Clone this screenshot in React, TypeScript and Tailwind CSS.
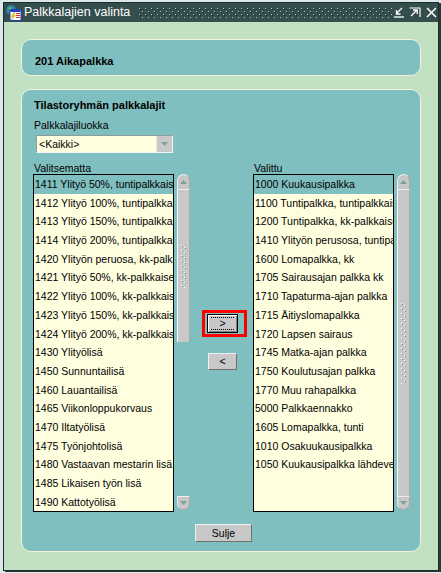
import React from "react";

const left = [
  "1411 Ylityö 50%, tuntipalkkaiset",
  "1412 Ylityö 100%, tuntipalkkaiset",
  "1413 Ylityö 150%, tuntipalkkaiset",
  "1414 Ylityö 200%, tuntipalkkaiset",
  "1420 Ylityön peruosa, kk-palkkaiset",
  "1421 Ylityö 50%, kk-palkkaiset",
  "1422 Ylityö 100%, kk-palkkaiset",
  "1423 Ylityö 150%, kk-palkkaiset",
  "1424 Ylityö 200%, kk-palkkaiset",
  "1430 Ylityölisä",
  "1450 Sunnuntailisä",
  "1460 Lauantailisä",
  "1465 Viikonloppukorvaus",
  "1470 Iltatyölisä",
  "1475 Työnjohtolisä",
  "1480 Vastaavan mestarin lisä",
  "1485 Likaisen työn lisä",
  "1490 Kattotyölisä",
];

const right = [
  "1000 Kuukausipalkka",
  "1100 Tuntipalkka, tuntipalkkaiset",
  "1200 Tuntipalkka, kk-palkkaiset",
  "1410 Ylityön perusosa, tuntipalkkaiset",
  "1600 Lomapalkka, kk",
  "1705 Sairausajan palkka kk",
  "1710 Tapaturma-ajan palkka",
  "1715 Äitiyslomapalkka",
  "1720 Lapsen sairaus",
  "1745 Matka-ajan palkka",
  "1750 Koulutusajan palkka",
  "1770 Muu rahapalkka",
  "5000 Palkkaennakko",
  "1605 Lomapalkka, tunti",
  "1010 Osakuukausipalkka",
  "1050 Kuukausipalkka lähdevero",
];

function Grip({ h, id }: { h: number; id: string }) {
  return (
    <svg width="7" height={h}>
      <defs>
        <pattern id={id} width="7" height="5" patternUnits="userSpaceOnUse">
          <rect x="1" y="0" width="1" height="1" fill="#ffffff" />
          <rect x="2" y="1" width="1" height="1" fill="#6f9494" />
          <rect x="4" y="2" width="1" height="1" fill="#ffffff" />
          <rect x="5" y="3" width="1" height="1" fill="#6f9494" />
        </pattern>
      </defs>
      <rect width="7" height={h} fill={`url(#${id})`} />
    </svg>
  );
}

function Scrollbar({ full, id }: { full: boolean; id: string }) {
  return (
    <div className="ml-[3px] flex h-[336px] w-[13px] flex-col">
      <div className="flex h-[16px] items-center justify-center rounded-t-[7px] border border-b border-[#ececec] border-r-[#a8a8a8] bg-[#c8c8c8]">
        <svg width="7" height="4">
          <path d="M0 4 L3.5 0 L7 4Z" fill="#7f9f9f" />
        </svg>
      </div>
      {full ? (
        <div className="flex flex-1 items-center justify-center border-l border-white border-r border-r-[#a8a8a8] bg-[#c8c8c8]">
          <Grip h={81} id={id} />
        </div>
      ) : (
        <>
          <div className="flex h-[152px] items-center justify-center border-l border-white border-r border-r-[#a8a8a8] bg-[#c8c8c8]">
            <Grip h={43} id={id} />
          </div>
          <div className="flex-1" />
        </>
      )}
      <div className="flex h-[14px] items-center justify-center rounded-b-[7px] border border-[#ececec] border-r-[#a8a8a8] border-b-[#a8a8a8] bg-[#c8c8c8]">
        <svg width="7" height="4">
          <path d="M0 0 L3.5 4 L7 0Z" fill="#7f9f9f" />
        </svg>
      </div>
    </div>
  );
}

function ListBox({ items }: { items: string[] }) {
  return (
    <div className="h-[338px] w-[141px] overflow-hidden border border-black bg-[#ffffe0]">
      {items.map((t, i) => (
        <div
          key={t}
          className={`h-[18.7px] overflow-hidden whitespace-nowrap pl-px text-[10.5px] leading-[18.7px] text-black ${
            i === 0 ? "bg-[#80bfbf]" : ""
          }`}
        >
          {t}
        </div>
      ))}
    </div>
  );
}

function TitleIcon() {
  return (
    <svg width="17" height="17" viewBox="0 0 17 17">
      <circle cx="6" cy="6" r="5" fill="#2f7f9f" />
      <path d="M3 4 Q5 2 7 4 Q8 6 6 8 Q4 7 3 4Z" fill="#5fbf5f" />
      <rect x="5" y="5.5" width="11" height="11" fill="#ffffff" stroke="#1f3fbf" strokeWidth="1" />
      <rect x="5.5" y="6" width="10" height="2" fill="#1f3fbf" />
      <rect x="11" y="9" width="4" height="1" fill="#df2f2f" />
      <rect x="11" y="11" width="4" height="1" fill="#df2f2f" />
      <rect x="11" y="13" width="4" height="1" fill="#df2f2f" />
      <path d="M9 8.5 L6 12.5 L8 12.5 L6.5 16 L10.5 11.5 L8.5 11.5 L10 8.5Z" fill="#ffdf00" stroke="#bf7f00" strokeWidth="0.4" />
    </svg>
  );
}

function TitleDots() {
  return (
    <svg width="253" height="10">
      <defs>
        <pattern id="tdots" width="6" height="6" patternUnits="userSpaceOnUse">
          <rect x="0" y="0" width="1" height="1" fill="#b4c4c4" />
          <rect x="1" y="1" width="1" height="1" fill="#1c2c2c" />
          <rect x="3" y="3" width="1" height="1" fill="#b4c4c4" />
          <rect x="4" y="4" width="1" height="1" fill="#1c2c2c" />
        </pattern>
      </defs>
      <rect width="253" height="10" fill="url(#tdots)" />
    </svg>
  );
}

export default function App() {
  return (
    <div className="h-[573px] w-[441px] overflow-hidden bg-[#dce8e8] pl-[3px] pt-[2px] font-['Liberation_Sans',Arial,sans-serif]">
      <div className="flex h-[569px] w-[436px] flex-col border border-[#1e2c2c] bg-[#c2e0c2] shadow-[2px_1px_0_#2a3a3a]">
        {/* Title bar */}
        <div className="flex h-[19px] items-center bg-[#344e4e]">
          <div className="ml-px">
            <TitleIcon />
          </div>
          <span className="ml-[2px] text-[12.5px] leading-[19px] text-white">Palkkalajien valinta</span>
          <div className="ml-[9px] flex items-center">
            <TitleDots />
          </div>
          <div className="ml-[2px] flex items-center">
            <svg width="11" height="11" viewBox="0 0 11 11">
              <path d="M8 1 L2.5 6.5 M2.5 3 L2.5 7 L6.5 7" stroke="#ffffff" strokeWidth="1.3" fill="none" />
              <path d="M0 10 L10 10" stroke="#ffffff" strokeWidth="1.3" />
            </svg>
            <svg width="12" height="11" viewBox="0 0 12 11" className="ml-[4px]">
              <path d="M0.5 1 L11 1 L11 10" stroke="#ffffff" strokeWidth="1.2" fill="none" />
              <path d="M2 9 L8 3 M4 3 L8.2 3 L8.2 7" stroke="#ffffff" strokeWidth="1.3" fill="none" />
            </svg>
            <svg width="11" height="11" viewBox="0 0 11 11" className="ml-[5px]">
              <path d="M1 1 L10 10 M10 1 L1 10" stroke="#ffffff" strokeWidth="1.5" />
            </svg>
          </div>
        </div>

        {/* Body */}
        <div className="flex flex-1 flex-col px-[17px] pt-[17px]">
          <div className="h-[37px] rounded-[10px] border border-[#f2f2da] bg-[#80bfbf] pl-[13px] pt-[14px] text-[11px] font-bold leading-[14px] text-black">
            201 Aikapalkka
          </div>

          <div className="mt-[13px] h-[463px] rounded-[10px] border border-[#f2f2da] bg-[#80bfbf] pl-[11px] pt-[8px] text-black">
            <div className="pl-px text-[11px] font-bold leading-[14px]">Tilastoryhmän palkkalajit</div>
            <div className="mt-[6px] pl-px text-[10.5px] leading-[14px]">Palkkalajiluokka</div>
            <div className="ml-[3px] mt-[3px] flex h-[18px] w-[137px] items-center border border-[#8c9c9c] border-b-[#f4f4f4] border-r-[#f4f4f4] bg-[#ffffe0]">
              <span className="flex-1 pl-[2px] text-[10.5px] leading-[16px]">&lt;Kaikki&gt;</span>
              <div className="flex h-full w-[16px] items-center justify-center border-l border-[#e8e8e8] bg-[#c8c8c8]">
                <svg width="7" height="4">
                  <path d="M0 0 L3.5 4 L7 0Z" fill="#7f9f9f" />
                </svg>
              </div>
            </div>

            <div className="mt-[9px] flex text-[10.5px] leading-[12px]">
              <div className="w-[220px] pl-px">Valitsematta</div>
              <div className="pl-px">Valittu</div>
            </div>

            <div className="flex">
              <ListBox items={left} />
              <Scrollbar full={false} id="g1" />
              <div className="flex w-[63px] flex-col pt-[140px]">
                <div className="relative ml-[17px] h-[19px] w-[31px]">
                  <div className="flex h-full w-full items-center justify-center border border-black bg-[#c8c8c8] shadow-[inset_1px_1px_0_#ffffff,inset_-1px_-1px_0_#808080]">
                    <div className="flex h-[13px] w-[23px] items-center justify-center border-y border-dotted border-black text-[10.5px] leading-[11px]">
                      &gt;
                    </div>
                  </div>
                  <div className="absolute left-[-5px] top-[-4px] h-[27px] w-[45px] border-[3px] border-[#ff0000]" />
                </div>
                <div className="ml-[18px] mt-[20px] flex h-[17px] w-[29px] items-center justify-center border border-[#f0f0f0] border-b-[#707070] border-r-[#707070] bg-[#c8c8c8] text-[10.5px] leading-[11px]">
                  &lt;
                </div>
              </div>
              <ListBox items={right} />
              <Scrollbar full={true} id="g2" />
            </div>

            <div className="ml-[162px] mt-[12px] flex h-[18px] w-[57px] items-center justify-center border border-[#f0f0f0] border-b-[#707070] border-r-[#707070] bg-[#c8c8c8] text-[10.5px] leading-[14px]">
              Sulje
            </div>
          </div>
        </div>
      </div>
    </div>
  );
}
